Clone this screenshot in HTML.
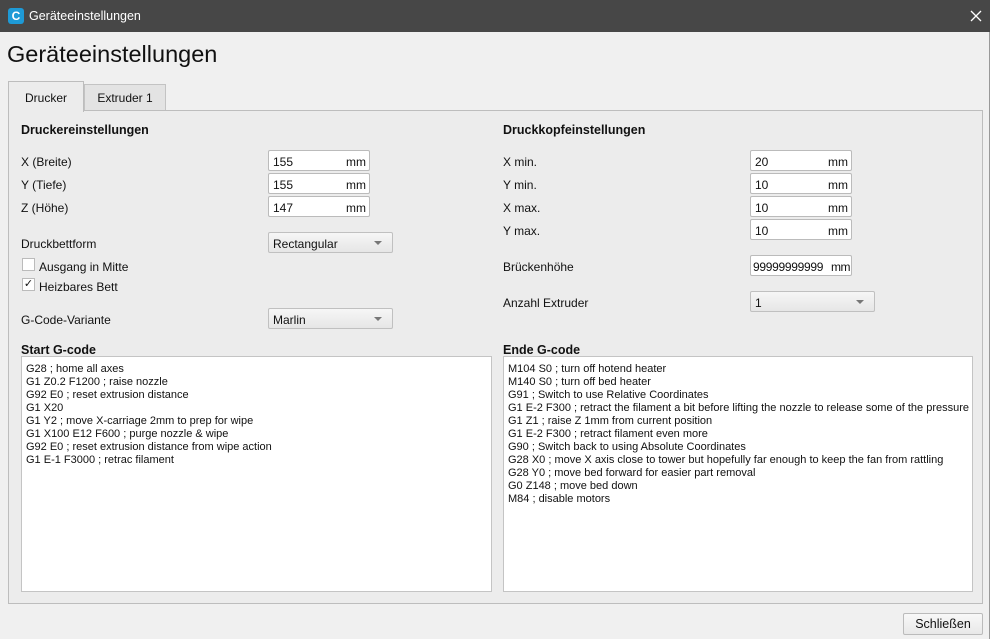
<!DOCTYPE html>
<html><head><meta charset="utf-8"><style>
*{margin:0;padding:0;box-sizing:border-box}
body{width:994px;height:639px;overflow:hidden;background:#fff;font-family:"Liberation Sans",sans-serif;font-size:12px;color:#111;position:relative}
.a{position:absolute;white-space:nowrap}
.win{position:absolute;left:0;top:0;width:990px;height:639px;background:#f0f0f0;border-right:1px solid #999}
.tb{position:absolute;left:0;top:0;width:990px;height:32px;background:#474747;color:#fff}
.panel{position:absolute;left:8px;top:110px;width:975px;height:494px;background:#ececec;border:1px solid #bdbdbd}
.inp{position:absolute;height:21px;width:102px;background:#fff;border:1px solid #bbb;border-radius:2px;padding:4px 4px 2px;font-size:12px}
.inp span{position:absolute;right:3px;top:4px}
.sel{position:absolute;height:21px;width:125px;background:linear-gradient(#f6f6f6,#e6e6e6);border:1px solid #c0c0c0;border-radius:2px;padding:4px 4px 2px}
.sel:after{content:"";position:absolute;right:10px;top:8px;border:4px solid transparent;border-top:4px solid #777}
.ta{position:absolute;top:356px;height:236px;width:471px;background:#fff;border:1px solid #c4c4c4;padding:6px 4px;font-size:11px;line-height:13px;white-space:pre}
b{font-weight:bold;font-size:12.5px}
.cb{position:absolute;width:13px;height:13px;background:#fff;border:1px solid #bbb}
</style></head><body>
<div class="win">
<div class="tb"><div class="a" style="left:8px;top:8px;width:16px;height:16px;background:#1e9ad6;border-radius:3px;color:#fff;font-weight:bold;font-size:12px;text-align:center;line-height:16px">C</div><div class="a" style="left:29px;top:9px;font-size:12.5px">Geräteeinstellungen</div>
<svg class="a" style="left:970px;top:10px" width="12" height="12"><path d="M1 1L11 11M11 1L1 11" stroke="#fff" stroke-width="1.3"/></svg></div>
<div class="a" style="left:7px;top:41px;font-size:23.5px;color:#111">Geräteeinstellungen</div>
<div class="a" style="left:84px;top:84px;width:82px;height:27px;background:#e3e3e3;border:1px solid #c3c3c3;text-align:center;line-height:27px">Extruder 1</div>
<div class="panel"></div>
<div class="a" style="left:8px;top:81px;width:76px;height:31px;background:#ececec;border:1px solid #bdbdbd;border-bottom:none;text-align:center;line-height:33px">Drucker</div>
<div class="a" style="left:21px;top:123px"><b>Druckereinstellungen</b></div>
<div class="a" style="left:503px;top:123px"><b>Druckkopfeinstellungen</b></div>
<div class="a" style="left:21px;top:155px">X (Breite)</div>
<div class="a" style="left:21px;top:178px">Y (Tiefe)</div>
<div class="a" style="left:21px;top:201px">Z (Höhe)</div>
<div class="inp" style="left:268px;top:150px">155<span>mm</span></div>
<div class="inp" style="left:268px;top:173px">155<span>mm</span></div>
<div class="inp" style="left:268px;top:196px">147<span>mm</span></div>
<div class="a" style="left:21px;top:237px">Druckbettform</div>
<div class="sel" style="left:268px;top:232px">Rectangular</div>
<div class="cb" style="left:22px;top:258px"></div><div class="a" style="left:39px;top:260px">Ausgang in Mitte</div>
<div class="cb" style="left:22px;top:278px;font-size:11px;line-height:11px;text-align:center">✓</div><div class="a" style="left:39px;top:280px">Heizbares Bett</div>
<div class="a" style="left:21px;top:313px">G-Code-Variante</div>
<div class="sel" style="left:268px;top:308px">Marlin</div>
<div class="a" style="left:503px;top:155px">X min.</div>
<div class="a" style="left:503px;top:178px">Y min.</div>
<div class="a" style="left:503px;top:201px">X max.</div>
<div class="a" style="left:503px;top:224px">Y max.</div>
<div class="inp" style="left:750px;top:150px">20<span>mm</span></div>
<div class="inp" style="left:750px;top:173px">10<span>mm</span></div>
<div class="inp" style="left:750px;top:196px">10<span>mm</span></div>
<div class="inp" style="left:750px;top:219px">10<span>mm</span></div>
<div class="a" style="left:503px;top:260px">Brückenhöhe</div>
<div class="inp" style="left:750px;top:255px;padding-left:2px;letter-spacing:-0.3px">99999999999<span style="right:1px;letter-spacing:-0.5px">mm</span></div>
<div class="a" style="left:503px;top:296px">Anzahl Extruder</div>
<div class="sel" style="left:750px;top:291px">1</div>
<div class="a" style="left:21px;top:343px"><b>Start G-code</b></div>
<div class="a" style="left:503px;top:343px"><b>Ende G-code</b></div>
<div class="ta" style="left:21px">G28 ; home all axes
G1 Z0.2 F1200 ; raise nozzle
G92 E0 ; reset extrusion distance
G1 X20
G1 Y2 ; move X-carriage 2mm to prep for wipe
G1 X100 E12 F600 ; purge nozzle &amp; wipe
G92 E0 ; reset extrusion distance from wipe action
G1 E-1 F3000 ; retrac filament</div>
<div class="ta" style="left:503px;width:470px">M104 S0 ; turn off hotend heater
M140 S0 ; turn off bed heater
G91 ; Switch to use Relative Coordinates
G1 E-2 F300 ; retract the filament a bit before lifting the nozzle to release some of the pressure
G1 Z1 ; raise Z 1mm from current position
G1 E-2 F300 ; retract filament even more
G90 ; Switch back to using Absolute Coordinates
G28 X0 ; move X axis close to tower but hopefully far enough to keep the fan from rattling
G28 Y0 ; move bed forward for easier part removal
G0 Z148 ; move bed down
M84 ; disable motors</div>
<div class="a" style="left:903px;top:613px;width:80px;height:22px;background:linear-gradient(#f8f8f8,#e8e8e8);border:1px solid #bbb;border-radius:2px;text-align:center;line-height:21px;font-size:12.5px">Schließen</div>
</div>
</body></html>
